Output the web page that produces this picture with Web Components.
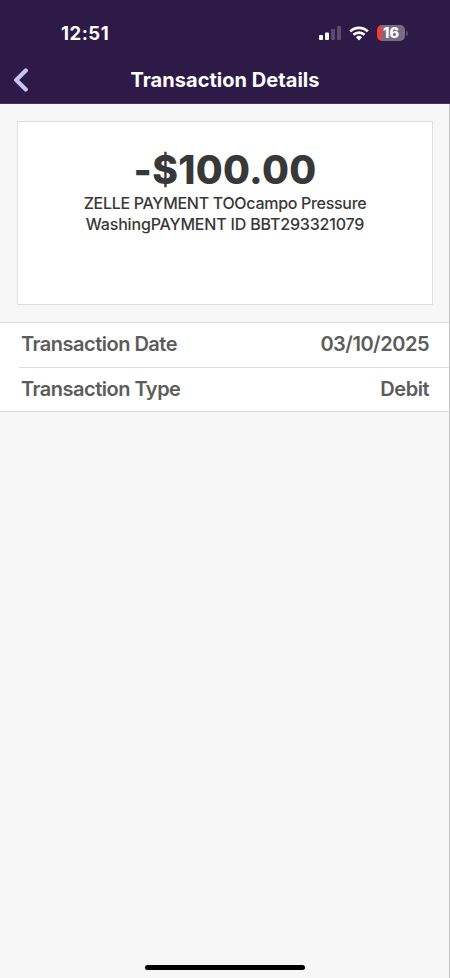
<!DOCTYPE html>
<html lang="en">
<head>
<meta charset="utf-8">
<meta name="viewport" content="width=device-width, initial-scale=1">
<title>Transaction Details</title>
<style>
    html, body {
        margin: 0;
        height: 100%;
    }
    body {
        font-family: Inter, "Liberation Sans", sans-serif;
        background: #f7f7f7;
        overflow: hidden;
    }
</style>
</head>
<body>
<transaction-screen>
    <status-bar slot="header" time="12:51" battery="16"></status-bar>
    <nav-bar slot="header">Transaction Details</nav-bar>
    <amount-card amount="-$100.00">
        <span>ZELLE PAYMENT TOOcampo Pressure</span>
        <span class="wide">WashingPAYMENT ID BBT293321079</span>
    </amount-card>
    <detail-list>
        <detail-row label="Transaction Date">03/10/2025</detail-row>
        <detail-row label="Transaction Type">Debit</detail-row>
    </detail-list>
</transaction-screen>

<script>
function createTemplate(html) {
    const template = document.createElement("template");
    template.innerHTML = html;
    return template;
}

const screenTemplate = createTemplate(`
    <style>
        :host {
            display: flex;
            flex-direction: column;
            box-sizing: border-box;
            height: 978px;
            border-right: 1px solid #c4c4c6;
            background: #f7f7f7;
        }
        header {
            box-sizing: border-box;
            height: 104px;
            margin-right: -1px;
            background: #2e1a47;
            border-bottom: 1px solid #46345b;
        }
        main {
            flex: 1;
        }
        footer {
            display: flex;
            justify-content: center;
            padding-bottom: 8px;
        }
        .home-indicator {
            width: 160px;
            height: 5px;
            border-radius: 3px;
            background: #000;
        }
    </style>
    <header><slot name="header"></slot></header>
    <main><slot></slot></main>
    <footer><div class="home-indicator"></div></footer>
`);

class TransactionScreen extends HTMLElement {
    constructor() {
        super();
        this.attachShadow({ mode: "open" }).append(screenTemplate.content.cloneNode(true));
    }
}

const statusTemplate = createTemplate(`
    <style>
        :host {
            display: flex;
            justify-content: space-between;
            align-items: center;
            box-sizing: border-box;
            height: 56px;
            padding: 10px 42px 0 61px;
            color: #fff;
        }
        #time {
            font-size: 18.5px;
            font-weight: 700;
            letter-spacing: 0.5px;
        }
        .icons {
            display: flex;
            align-items: center;
        }
        .signal { margin-right: 8px; }
        .wifi { margin-right: 8px; }
        .battery {
            display: flex;
            align-items: center;
            justify-content: center;
            width: 28px;
            height: 16px;
            border-radius: 5px;
            background: linear-gradient(90deg, #ee4038 5px, #786b88 5px);
            font-size: 14.5px;
            font-weight: 800;
            line-height: 16px;
        }
        .cap {
            width: 2px;
            height: 5px;
            margin-left: 1px;
            border-radius: 0 2px 2px 0;
            background: #5b4a70;
        }
    </style>
    <span id="time"></span>
    <div class="icons">
        <svg class="signal" width="22" height="14" viewBox="0 0 22 14">
            <rect x="0" y="9" width="4" height="5" rx="1" fill="#fff"/>
            <rect x="6" y="6.5" width="4" height="7.5" rx="1" fill="#fff"/>
            <rect x="12" y="3" width="4" height="11" rx="1" fill="#5b4a70"/>
            <rect x="18" y="0" width="4" height="14" rx="1" fill="#5b4a70"/>
        </svg>
        <svg class="wifi" width="20" height="15" viewBox="0 0 20 15">
            <g fill="none" stroke="#fff" stroke-width="2.7">
                <path d="M1.2 5.4a12.6 12.6 0 0 1 17.6 0"/>
                <path d="M4.5 8.8a7.9 7.9 0 0 1 11 0"/>
            </g>
            <path d="M6.9 11.2a4.5 4.5 0 0 1 6.2 0L10 14.4z" fill="#fff"/>
        </svg>
        <span class="battery" id="battery"></span>
        <span class="cap"></span>
    </div>
`);

class StatusBar extends HTMLElement {
    constructor() {
        super();
        this.attachShadow({ mode: "open" }).append(statusTemplate.content.cloneNode(true));
    }

    connectedCallback() {
        this.shadowRoot.querySelector("#time").textContent = this.getAttribute("time");
        this.shadowRoot.querySelector("#battery").textContent = this.getAttribute("battery");
    }
}

const navTemplate = createTemplate(`
    <style>
        :host {
            display: grid;
            grid-template-columns: 40px 1fr 40px;
            align-items: center;
            height: 48px;
            color: #fff;
        }
        svg {
            margin-left: 13px;
        }
        .title {
            text-align: center;
            font-size: 20px;
            font-weight: 700;
            line-height: 24px;
            letter-spacing: 0.04px;
        }
    </style>
    <svg width="16" height="24" viewBox="0 0 16 24">
        <path d="M12.8 2.4L3.2 12l9.6 9.4" fill="none" stroke="#c9c2fb" stroke-width="4.2" stroke-linecap="round" stroke-linejoin="round"/>
    </svg>
    <div class="title"><slot></slot></div>
`);

class NavBar extends HTMLElement {
    constructor() {
        super();
        this.attachShadow({ mode: "open" }).append(navTemplate.content.cloneNode(true));
    }
}

const cardTemplate = createTemplate(`
    <style>
        :host {
            display: block;
            box-sizing: border-box;
            height: 184px;
            margin: 17px 16px 0 17px;
            padding-top: 25px;
            background: #fff;
            border: 1px solid #dedede;
            color: #383838;
            text-align: center;
        }
        #amount {
            font-size: 39px;
            font-weight: 800;
            line-height: 46px;
            letter-spacing: 0.3px;
        }
        ::slotted(span) {
            display: block;
            font-size: 16px;
            font-weight: 550;
            line-height: 21px;
            letter-spacing: -0.3px;
            white-space: nowrap;
        }
        ::slotted(.wide) {
            letter-spacing: -0.18px;
        }
    </style>
    <div id="amount"></div>
    <slot></slot>
`);

class AmountCard extends HTMLElement {
    constructor() {
        super();
        this.attachShadow({ mode: "open" }).append(cardTemplate.content.cloneNode(true));
    }

    connectedCallback() {
        this.shadowRoot.querySelector("#amount").textContent = this.getAttribute("amount");
    }
}

const listTemplate = createTemplate(`
    <style>
        :host {
            display: block;
            margin-top: 17px;
            background: #fff;
            border-top: 1px solid #dcdcdc;
            border-bottom: 1px solid #dcdcdc;
        }
        ::slotted(:not(:first-child)) {
            border-top: 1px solid #dcdcdc;
        }
    </style>
    <slot></slot>
`);

class DetailList extends HTMLElement {
    constructor() {
        super();
        this.attachShadow({ mode: "open" }).append(listTemplate.content.cloneNode(true));
    }
}

const rowTemplate = createTemplate(`
    <style>
        :host {
            display: flex;
            justify-content: space-between;
            align-items: center;
            box-sizing: border-box;
            height: 44px;
            margin-left: 19px;
            padding: 0 20px 2px 2px;
            color: #5c5c5c;
            font-size: 20px;
            font-weight: 570;
        }
        #label {
            letter-spacing: -0.5px;
        }
        .value {
            letter-spacing: -0.48px;
        }
    </style>
    <span id="label"></span>
    <span class="value"><slot></slot></span>
`);

class DetailRow extends HTMLElement {
    constructor() {
        super();
        this.attachShadow({ mode: "open" }).append(rowTemplate.content.cloneNode(true));
    }

    connectedCallback() {
        this.shadowRoot.querySelector("#label").textContent = this.getAttribute("label");
    }
}

customElements.define("transaction-screen", TransactionScreen);
customElements.define("status-bar", StatusBar);
customElements.define("nav-bar", NavBar);
customElements.define("amount-card", AmountCard);
customElements.define("detail-list", DetailList);
customElements.define("detail-row", DetailRow);
</script>
</body>
</html>
